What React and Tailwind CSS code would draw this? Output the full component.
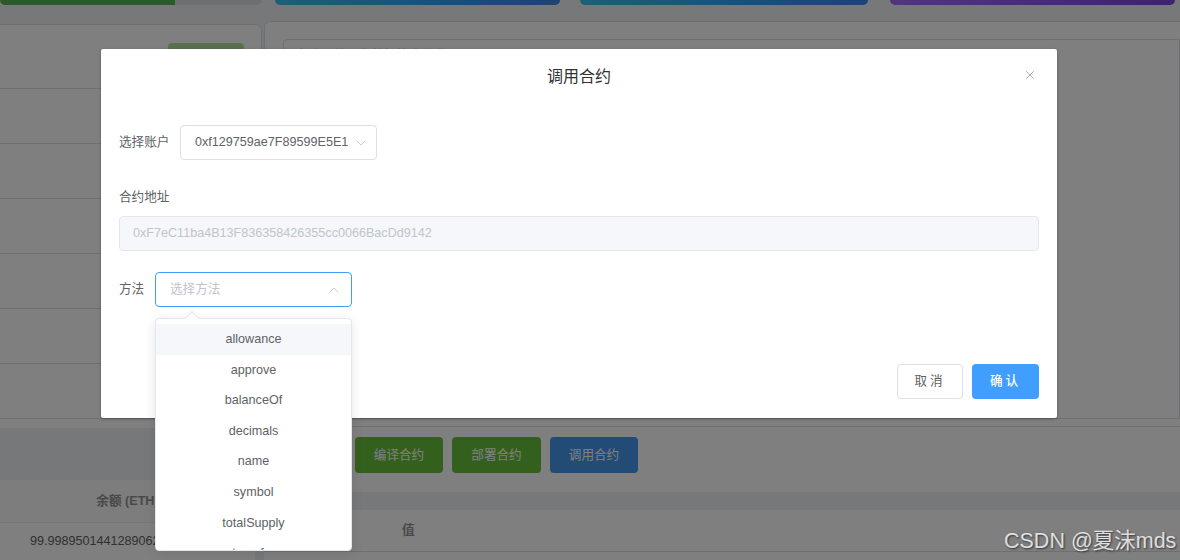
import { ChevronDown, ChevronUp, X } from "lucide-react";

const methods = ["allowance", "approve", "balanceOf", "decimals", "name", "symbol", "totalSupply", "transfer"];

const font = "font-['Liberation_Sans','Noto_Sans_CJK_SC',sans-serif]";

const App = () => {
  return (
    <div className={`relative w-[1180px] h-[560px] overflow-hidden bg-[#eff0f2] ${font}`}>
      {/* page behind the dialog */}
      <div className="flex flex-col h-full">
        <div className="flex h-[5px] shrink-0">
          <div className="w-[262px] rounded-b-[6px] bg-[#dedede] overflow-hidden">
            <div className="w-[175px] h-full bg-[#55b455]" />
          </div>
          <div className="ml-[13px] w-[285px] rounded-b-[6px] bg-gradient-to-r from-[#36c0f0] to-[#3a86e8]" />
          <div className="ml-[20px] w-[288px] rounded-b-[6px] bg-gradient-to-r from-[#36c0f0] to-[#3a86e8]" />
          <div className="ml-[22px] w-[285px] rounded-b-[6px] bg-gradient-to-r from-[#a36ef0] to-[#7a44de]" />
        </div>

        <div className="flex flex-1 mt-[16px]">
          <div className="w-[262px] flex flex-col">
            <div className="mt-[3px] h-[404px] bg-white rounded-tr-[6px] border-t border-r border-[#dcdfe6]">
              <div className="h-[64px] flex justify-end pt-[18px] pr-[17px] border-b border-[#dcdfe6]">
                <div className="w-[76px] h-[34px] rounded-[4px] bg-[#b3e19d]" />
              </div>
              {[0, 1, 2, 3, 4, 5].map((i) => (
                <div key={i} className="h-[55px] border-b border-[#dcdfe6]" />
              ))}
            </div>
            <div className="mt-[52px] w-[255px] bg-white">
              <div className="h-[43px] flex items-center justify-center bg-[#fafafa] border-b border-[#ebeef5] text-[12.6px] font-bold text-[#909399]">
                余额 (ETH)
              </div>
              <div className="h-[40px] pl-[30px] pt-[9px] text-[12.6px] text-[#606266] whitespace-nowrap overflow-hidden">
                99.998950144128906249
              </div>
            </div>
          </div>

          <div className="ml-[2px] flex-1 flex flex-col">
            <div className="h-[406px] bg-white rounded-tl-[6px] border-t border-l border-b border-[#dcdfe6] pt-[17px] pl-[18px]">
              <div className="h-[380px] border border-[#dcdfe6] rounded-l-[4px] pl-[12px] pt-[6px] text-[12.6px] text-[#c0c4cc]">
                在这里编写你的智能合约代码
              </div>
            </div>
            <div className="h-[65px] bg-white flex gap-[9px] pl-[91px] pt-[10px]">
              <div className="w-[88px] h-[36px] rounded-[4px] bg-[#67c23a] text-white text-[12.6px] flex items-center justify-center">编译合约</div>
              <div className="w-[89px] h-[36px] rounded-[4px] bg-[#67c23a] text-white text-[12.6px] flex items-center justify-center">部署合约</div>
              <div className="w-[88px] h-[36px] rounded-[4px] bg-[#4497ea] text-white text-[12.6px] flex items-center justify-center">调用合约</div>
            </div>
            <div className="mt-[18px] flex-1 bg-white">
              <div className="h-[42px] flex items-center border-b border-[#dcdfe6] pl-[138px] text-[12.6px] font-bold text-[#909399]">
                值
              </div>
            </div>
          </div>
        </div>
      </div>

      {/* overlay */}
      <div className="absolute inset-0 bg-black/50" />

      {/* dialog */}
      <div className="absolute left-[101px] top-[49px] w-[956px] h-[369px] bg-white rounded-[2px] shadow-[0_1px_3px_rgba(0,0,0,0.3)] flex flex-col">
        <div className="relative h-[55px] flex items-center justify-center text-[16px] text-[#303133]">
          调用合约
          <X className="absolute right-[20px] top-[19px] w-[14px] h-[14px] text-[#909399]" strokeWidth={1.3} />
        </div>
        <div className="px-[18px] flex flex-col text-[12.6px] text-[#606266]">
          <div className="mt-[21px] flex items-center h-[35px]">
            <span className="w-[61px]">选择账户</span>
            <div className="w-[197px] h-[35px] border border-[#dcdfe6] rounded-[4px] flex items-center pl-[14px] pr-[7px]">
              <span className="flex-1 overflow-hidden whitespace-nowrap text-[#606266]">0xf129759ae7F89599E5E1</span>
              <ChevronDown className="ml-[2px] w-[16px] h-[16px] text-[#c0c4cc]" strokeWidth={1.3} />
            </div>
          </div>
          <div className="mt-[27px] h-[20px] leading-[20px]">合约地址</div>
          <div className="mt-[9px] h-[35px] bg-[#f5f7fa] border border-[#e4e7ed] rounded-[4px] flex items-center pl-[13px] text-[#c0c4cc]">
            0xF7eC11ba4B13F836358426355cc0066BacDd9142
          </div>
          <div className="mt-[21px] flex items-center h-[35px]">
            <span className="w-[36px]">方法</span>
            <div className="w-[197px] h-[35px] border border-[#409eff] rounded-[4px] flex items-center pl-[14px] pr-[9px]">
              <span className="flex-1 text-[#c0c4cc]">选择方法</span>
              <ChevronUp className="w-[16px] h-[16px] text-[#c0c4cc]" strokeWidth={1.3} />
            </div>
          </div>
          <div className="mt-[57px] flex justify-end gap-[9px]">
            <div className="w-[66px] h-[35px] border border-[#dcdfe6] rounded-[4px] flex items-center justify-center text-[#606266] tracking-[3px]">取消</div>
            <div className="w-[67px] h-[35px] rounded-[4px] bg-[#409eff] flex items-center justify-center text-white font-medium tracking-[3px]">确认</div>
          </div>
        </div>
      </div>

      {/* select dropdown */}
      <div className="absolute left-[155px] top-[318px] w-[197px] h-[233px] bg-white border border-[#e4e7ed] rounded-[4px] shadow-[0_2px_12px_rgba(0,0,0,0.1)]">
        <div className="absolute -top-[6px] left-[31px] w-[10px] h-[10px] bg-white border-l border-t border-[#e4e7ed] rotate-45" />
        <div className="relative h-full overflow-hidden pt-[5px]">
          {methods.map((m, i) => (
            <div
              key={m}
              className={`h-[30.6px] leading-[30.6px] text-center text-[12.6px] text-[#606266] ${i === 0 ? "bg-[#f5f7fa]" : ""}`}
            >
              {m}
            </div>
          ))}
        </div>
      </div>

      {/* watermark */}
      <div className="absolute left-[1004px] top-[525px] text-[21.5px] text-white/80 [text-shadow:1px_1px_2px_rgba(0,0,0,0.6)]">
        CSDN @夏沫mds
      </div>
    </div>
  );
};

export default App;
